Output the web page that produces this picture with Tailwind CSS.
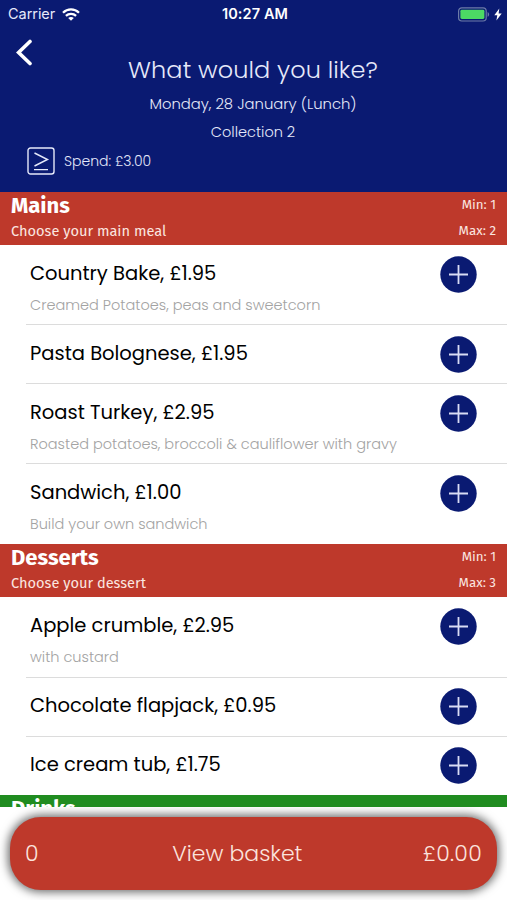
<!DOCTYPE html>
<html lang="en">

<head>
  <meta charset="UTF-8">
  <meta name="viewport" content="width=device-width, initial-scale=1.0">
  <title>What would you like?</title>
  <script src="https://cdn.jsdelivr.net/npm/@tailwindcss/browser@4"></script>
</head>

<body class="h-[900px] flex flex-col overflow-hidden bg-white font-['Poppins','Inter',sans-serif] text-black">
  <header class="h-[192px] shrink-0 bg-[#0a1a72] text-[#e6e9fa]">
    <!-- status bar -->
    <div class="h-[28px] pl-2 pr-[5px] grid grid-cols-3 items-center text-white font-['Inter',sans-serif]">
      <div class="flex items-center gap-[7px]">
        <span class="text-[14.5px] tracking-[-0.05px] text-[#e6e9fa]">Carrier</span>
        <svg class="w-[18px] h-[13px]" viewBox="0 0 18 13" fill="none" stroke="currentColor" stroke-width="2.3">
          <path d="M1 4.7C5.5.3 12.5.3 17 4.7" />
          <path d="M3.9 7.8c2.9-2.7 7.3-2.7 10.2 0" />
          <path d="M9 12.8 6.2 10c1.5-1.4 4.1-1.4 5.6 0z" fill="currentColor" stroke="none" />
        </svg>
      </div>
      <span class="text-center text-[14.5px] font-semibold tracking-[0.1px] whitespace-nowrap">10:27 AM</span>
      <div class="flex items-center justify-end gap-[4px]">
        <svg class="w-[32px] h-[15px]" viewBox="0 0 32 15">
          <rect x=".6" y=".8" width="27.6" height="13.2" rx="3.2" fill="none" stroke="#6c7ba8" stroke-width="1.2" />
          <rect x="2.4" y="2.8" width="24" height="9.2" rx="1.4" fill="#4cd964" />
          <path d="M29.6 5c2 .8 2 4 0 4.8z" fill="#6c7ba8" />
        </svg>
        <svg class="w-[8px] h-[13px]" viewBox="0 0 8 13" fill="currentColor">
          <path d="M5.3.5.3 7.3h3L2.4 12.5 7.7 5.6H4.6z" />
        </svg>
      </div>
    </div>

    <div class="h-[28px] pl-[15px] pt-[11px]">
      <svg class="w-[18px] h-[27px]" viewBox="0 0 18 27" fill="none" stroke="#fff" stroke-width="3.6" stroke-linecap="round">
        <path d="M15 2.5 3.6 13.5 15 24.5" />
      </svg>
    </div>

    <div class="text-center -ml-[1px]">
      <h1 class="h-[27px] leading-[27px] text-[24px] font-light tracking-[0.1px]">What would you like?</h1>
      <p class="mt-[7px] h-[28px] leading-[28px] text-[14.8px] font-light">Monday, 28 January (Lunch)</p>
      <p class="h-[28px] leading-[28px] text-[14.5px] font-light">Collection 2</p>
    </div>
    <div class="flex items-center pl-[27px] gap-[9px] h-[30px]">
      <svg class="w-[28px] h-[28px]" viewBox="0 0 28 28" fill="none" stroke="currentColor" stroke-width="1.4">
        <rect x="1" y="1" width="26" height="26" rx="2.5" />
        <path d="M7.5 6 20.5 12.5 7.5 19M7 22.6h14" />
      </svg>
      <span class="text-[14px] font-light">Spend: £3.00</span>
    </div>
  </header>

  <main class="h-[615px] shrink-0 overflow-hidden">
    <section>
      <div class="h-[53px] flex justify-between px-[11px] bg-[#be392b] text-white font-['Fira_Sans','Noto_Sans',sans-serif]">
        <div>
          <h2 class="h-[26px] leading-[27px] text-[22px] font-bold">Mains</h2>
          <p class="leading-[26px] text-[14.6px] text-[#fbe6e0]">Choose your main meal</p>
        </div>
        <div class="text-right text-[13.3px] leading-[26px] text-[#fbe6e0]">
          <p>Min: 1</p>
          <p>Max: 2</p>
        </div>
      </div>
      <ul class="pl-[26px]">
        <li class="h-[80px] flex justify-between border-b border-[#dcdcdc] pl-[4px] pr-[30px] pt-[11px]">
          <div>
            <h3 class="leading-[36px] text-[19.5px]">Country Bake, £1.95</h3>
            <p class="leading-[26px] text-[14.5px] font-light text-[#a3a3a3]">Creamed Potatoes, peas and sweetcorn</p>
          </div>
          <svg class="w-[37px] h-[37px]" viewBox="0 0 37 37">
            <circle cx="18.5" cy="18.5" r="18.2" fill="#0a1a72" />
            <path d="M9 18.5h19M18.5 9v19" stroke="#d9dcf4" stroke-width="1.8" />
          </svg>
        </li>
        <li class="h-[59px] flex justify-between border-b border-[#dcdcdc] pl-[4px] pr-[30px] pt-[11px]">
          <h3 class="leading-[36px] text-[19.5px]">Pasta Bolognese, £1.95</h3>
          <svg class="w-[37px] h-[37px]" viewBox="0 0 37 37">
            <circle cx="18.5" cy="18.5" r="18.2" fill="#0a1a72" />
            <path d="M9 18.5h19M18.5 9v19" stroke="#d9dcf4" stroke-width="1.8" />
          </svg>
        </li>
        <li class="h-[80px] flex justify-between border-b border-[#dcdcdc] pl-[4px] pr-[30px] pt-[11px]">
          <div>
            <h3 class="leading-[36px] text-[19.5px]">Roast Turkey, £2.95</h3>
            <p class="leading-[26px] text-[14.5px] font-light text-[#a3a3a3]">Roasted potatoes, broccoli &amp; cauliflower with gravy</p>
          </div>
          <svg class="w-[37px] h-[37px]" viewBox="0 0 37 37">
            <circle cx="18.5" cy="18.5" r="18.2" fill="#0a1a72" />
            <path d="M9 18.5h19M18.5 9v19" stroke="#d9dcf4" stroke-width="1.8" />
          </svg>
        </li>
        <li class="h-[80px] flex justify-between pl-[4px] pr-[30px] pt-[11px]">
          <div>
            <h3 class="leading-[36px] text-[19.5px]">Sandwich, £1.00</h3>
            <p class="leading-[26px] text-[14.5px] font-light text-[#a3a3a3]">Build your own sandwich</p>
          </div>
          <svg class="w-[37px] h-[37px]" viewBox="0 0 37 37">
            <circle cx="18.5" cy="18.5" r="18.2" fill="#0a1a72" />
            <path d="M9 18.5h19M18.5 9v19" stroke="#d9dcf4" stroke-width="1.8" />
          </svg>
        </li>
      </ul>
    </section>

    <section>
      <div class="h-[53px] flex justify-between px-[11px] bg-[#be392b] text-white font-['Fira_Sans','Noto_Sans',sans-serif]">
        <div>
          <h2 class="h-[26px] leading-[27px] text-[22px] font-bold">Desserts</h2>
          <p class="leading-[26px] text-[14.6px] text-[#fbe6e0]">Choose your dessert</p>
        </div>
        <div class="text-right text-[13.3px] leading-[26px] text-[#fbe6e0]">
          <p>Min: 1</p>
          <p>Max: 3</p>
        </div>
      </div>
      <ul class="pl-[26px]">
        <li class="h-[81px] flex justify-between border-b border-[#dcdcdc] pl-[4px] pr-[30px] pt-[11px]">
          <div>
            <h3 class="leading-[36px] text-[19.5px]">Apple crumble, £2.95</h3>
            <p class="leading-[26px] text-[14.5px] font-light text-[#a3a3a3]">with custard</p>
          </div>
          <svg class="w-[37px] h-[37px]" viewBox="0 0 37 37">
            <circle cx="18.5" cy="18.5" r="18.2" fill="#0a1a72" />
            <path d="M9 18.5h19M18.5 9v19" stroke="#d9dcf4" stroke-width="1.8" />
          </svg>
        </li>
        <li class="h-[59px] flex justify-between border-b border-[#dcdcdc] pl-[4px] pr-[30px] pt-[10px]">
          <h3 class="leading-[36px] text-[19.5px]">Chocolate flapjack, £0.95</h3>
          <svg class="w-[37px] h-[37px]" viewBox="0 0 37 37">
            <circle cx="18.5" cy="18.5" r="18.2" fill="#0a1a72" />
            <path d="M9 18.5h19M18.5 9v19" stroke="#d9dcf4" stroke-width="1.8" />
          </svg>
        </li>
        <li class="h-[58px] flex justify-between pl-[4px] pr-[30px] pt-[10px]">
          <h3 class="leading-[36px] text-[19.5px]">Ice cream tub, £1.75</h3>
          <svg class="w-[37px] h-[37px]" viewBox="0 0 37 37">
            <circle cx="18.5" cy="18.5" r="18.2" fill="#0a1a72" />
            <path d="M9 18.5h19M18.5 9v19" stroke="#d9dcf4" stroke-width="1.8" />
          </svg>
        </li>
      </ul>
    </section>

    <section class="h-[53px] pl-[11px] bg-[#208c20] text-white font-['Fira_Sans','Noto_Sans',sans-serif]">
      <h2 class="leading-[27px] text-[22px] font-bold">Drinks</h2>
    </section>
  </main>

  <footer class="h-[93px] shrink-0 overflow-hidden pt-[10px] px-[10px] bg-white">
    <button class="w-full h-[73px] flex items-center px-[15px] rounded-[31px] bg-[#be392b] text-[22px] font-light text-[#fbe3dd] shadow-[0_0_10px_2px_rgba(0,0,0,0.6)]">
      <span class="w-[27px] text-left">0</span>
      <span class="flex-1 text-center">View basket</span>
      <span class="text-right tracking-[0.3px]">£0.00</span>
    </button>
  </footer>
</body>

</html>
